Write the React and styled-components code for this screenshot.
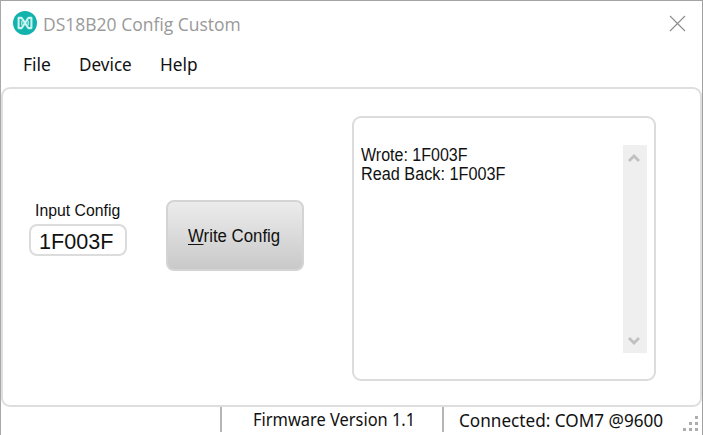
import React from 'react';
import styled, { createGlobalStyle } from 'styled-components';

const GlobalStyle = createGlobalStyle`
  * { box-sizing: border-box; }
  body { margin: 0; background: #fff; overflow: hidden; }
`;

const Window = styled.div`
  width: 703px;
  height: 435px;
  display: flex;
  flex-direction: column;
  background: #fff;
  border-top: 1px solid #a3a3a3;
  border-left: 1px solid #a8a8a8;
  border-right: 1px solid #a0a0a0;
  color: #111;
  font-family: 'Noto Sans', sans-serif;
`;

const Text = styled.span`
  display: inline-block;
  white-space: nowrap;
  flex: none;
  transform-origin: 0 50%;
  transform: scaleX(${(p) => p.$stretch || 1});
`;

const TitleBar = styled.header`
  height: 45px;
  display: flex;
  align-items: center;
  padding: 0 16px 0 12px;
`;

const Title = styled.h1`
  flex: 1;
  margin: 1px 0 0 4.5px;
  font: 400 18px/24px 'Open Sans', sans-serif;
  color: #999;
`;

const CloseButton = styled.button`
  width: 17px;
  height: 17px;
  padding: 0;
  border: 0;
  background: none;
  display: block;
`;

const MenuBar = styled.nav`
  height: 41px;
  display: grid;
  grid-template-columns: 56px 81px 60px;
  padding: 6px 0 0 22px;
  font-size: 18px;
  line-height: 24px;
`;

const Panel = styled.main`
  height: 320px;
  display: flex;
  align-items: flex-start;
  border: 2px solid #dedede;
  border-radius: 9px;
  padding: 27px 43px 0 26px;
  font-family: 'Liberation Sans', sans-serif;
`;

const Field = styled.label`
  width: 98px;
  margin-top: 84px;
  display: flex;
  flex-direction: column;
  font-size: 17px;
  line-height: 22px;
`;

const FieldName = styled.span`
  height: 24px;
  padding-left: 6px;
`;

const FieldBox = styled.span`
  height: 32px;
  border: 2px solid #dcdcdc;
  border-radius: 8px;
  padding: 2px 0 0 8px;
  font-size: 22px;
  line-height: 27px;
`;

const WriteButton = styled.button`
  width: 138px;
  height: 71px;
  margin: 84px 48px 0 39px;
  padding: 1px 0 0 20px;
  border: 2px solid #d4d4d4;
  border-radius: 8px;
  background: linear-gradient(#ececec, #c9c9c9);
  text-align: left;
  font: 17.5px/22px 'Liberation Sans', sans-serif;
  color: #111;
  u { text-decoration-thickness: 1px; text-underline-offset: 2px; }
`;

const Output = styled.section`
  width: 304px;
  height: 265px;
  display: flex;
  justify-content: space-between;
  border: 2px solid #dcdcdc;
  border-radius: 9px;
  padding: 27px 7px 0 7px;
  font-size: 17.5px;
  line-height: 19px;
`;

const Lines = styled.div`
  display: flex;
  flex-direction: column;
  align-items: flex-start;
  padding-top: 1px;
`;

const ScrollBar = styled.div`
  width: 24px;
  height: 208px;
  display: flex;
  flex-direction: column;
  justify-content: space-between;
  align-items: center;
  padding: 8px 2px 7px 0;
  background: #efefef;
`;

const StatusBar = styled.footer`
  height: 28px;
  display: grid;
  grid-template-columns: 221px 222px 239px 16px;
  font-size: 17.5px;
  line-height: 24px;
`;

const StatusCell = styled.div`
  height: 25px;
  border-right: ${(p) => (p.$divider ? '2px solid #b5b5b5' : '0')};
  padding: ${(p) => p.$pad || '0'};
`;

const Logo = () => (
  <svg width="25" height="25" viewBox="0 0 25 25">
    <circle cx="12" cy="12" r="12" fill="#12b3ad" />
    <g fill="none" stroke="#c9f3ef" strokeWidth="2.1" strokeLinejoin="round">
      <path d="M5.6 6.9H8.6L15.4 17.1H18.4V6.9H15.4L8.6 17.1H5.6Z" />
      <path d="M8.8 9.8v4.4M15.2 9.8v4.4" strokeWidth="1.2" />
    </g>
  </svg>
);

const Chevron = ({ down }) => (
  <svg width="12" height="10" viewBox="0 0 12 10">
    <path
      d={down ? 'M1 2 6 7 11 2' : 'M1 8 6 3 11 8'}
      fill="none"
      stroke="#c0c0c0"
      strokeWidth="2.8"
    />
  </svg>
);

const dots = [[14, 0], [8, 6], [14, 6], [2, 12], [8, 12], [14, 12]];

const ResizeGrip = styled.svg`
  margin-top: 9px;
  display: block;
`;

export default function App() {
  return (
    <>
      <GlobalStyle />
      <Window>
        <TitleBar>
          <Logo />
          <Title><Text $stretch={0.972}>DS18B20 Config Custom</Text></Title>
          <CloseButton aria-label="Close">
            <svg width="17" height="17" viewBox="0 0 17 17">
              <path d="M1 1 16 16M16 1 1 16" stroke="#8c8c8c" strokeWidth="1.1" />
            </svg>
          </CloseButton>
        </TitleBar>
        <MenuBar>
          <Text $stretch={0.97}>File</Text>
          <Text $stretch={0.95}>Device</Text>
          <Text $stretch={0.96}>Help</Text>
        </MenuBar>
        <Panel>
          <Field>
            <FieldName><Text $stretch={0.93}>Input Config</Text></FieldName>
            <FieldBox><Text $stretch={0.98}>1F003F</Text></FieldBox>
          </Field>
          <WriteButton><Text $stretch={0.96}><u>W</u>rite Config</Text></WriteButton>
          <Output>
            <Lines>
              <Text $stretch={0.915}>Wrote: 1F003F</Text>
              <Text $stretch={0.928}>Read Back: 1F003F</Text>
            </Lines>
            <ScrollBar>
              <Chevron />
              <Chevron down />
            </ScrollBar>
          </Output>
        </Panel>
        <StatusBar>
          <StatusCell $divider />
          <StatusCell $divider $pad="0 0 0 31px"><Text $stretch={0.938}>Firmware Version 1.1</Text></StatusCell>
          <StatusCell $pad="1px 0 0 15px"><Text $stretch={0.98}>Connected: COM7 @9600</Text></StatusCell>
          <ResizeGrip width="17" height="15" viewBox="0 0 17 15">
            {dots.map(([x, y]) => (
              <rect key={`${x}-${y}`} x={x - 2} y={y} width="3" height="3" fill="#adadad" />
            ))}
          </ResizeGrip>
        </StatusBar>
      </Window>
    </>
  );
}
